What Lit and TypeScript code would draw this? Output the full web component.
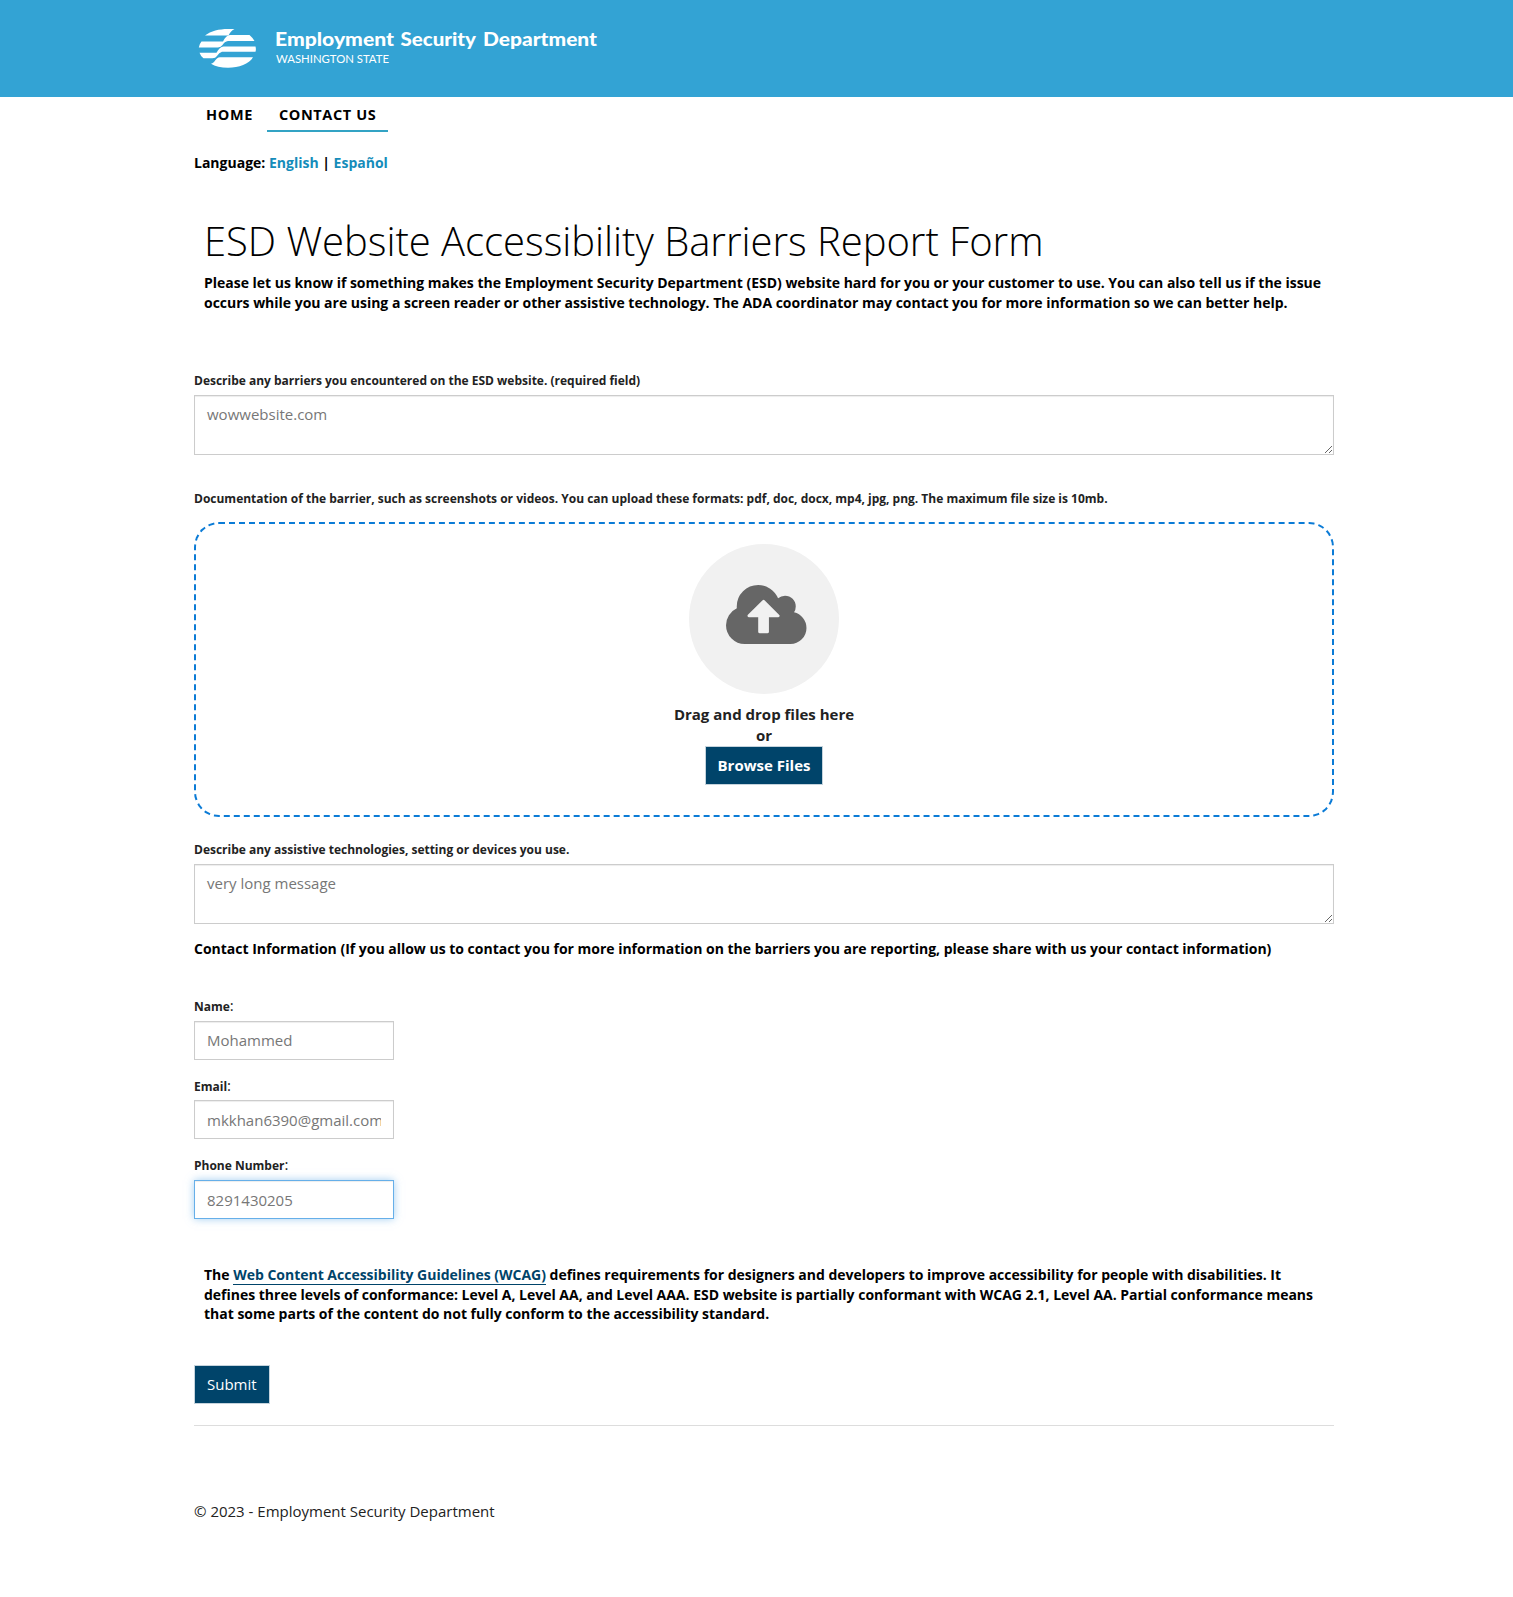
import { LitElement, html, css } from "lit";
import { customElement } from "lit/decorators.js";

@customElement("app-root")
export class AppRoot extends LitElement {
  static styles = css`
    :host { display: block; height: 1597px; overflow: hidden; background: #fff; color: #222; font: 15px/21.43px "Open Sans", sans-serif; }
    * { box-sizing: border-box; }
    .container { width: 1140px; margin-left: 194px; }
    .top { background: #33a3d4; height: 97px; }
    .logo { display: block; width: 420px; height: 97px; }
    .brand { font: 900 19px Lato, sans-serif; fill: #fff; }
    .state { font: 400 12px Lato, sans-serif; fill: #fff; }
    .nav { display: flex; height: 35px; }
    .nav a { padding: 7px 12px 0; height: 35px; font-size: 14.5px; font-weight: 700; letter-spacing: 0.62px; color: #000; border-bottom: 2px solid transparent; }
    .nav a.active { border-color: #33a3c4; margin-left: 2px; }
    .lang { margin-top: 21px; height: 20px; font-size: 14px; line-height: 20px; font-weight: 700; color: #000; }
    .lang a { color: #158cba; }
    h1 { margin: 44px 0 0 10px; font-size: 40px; line-height: 47px; height: 56px; font-weight: 300; letter-spacing: -0.025px; color: #000; white-space: nowrap; }
    .para { margin: 0 10px; font-size: 14px; line-height: 19.8px; font-weight: 700; letter-spacing: -0.013px; color: #000; white-space: nowrap; }
    .label { display: block; font-size: 12px; line-height: 17px; height: 17px; font-weight: 700; letter-spacing: -0.005px; white-space: nowrap; }
    .thin { font-weight: 400; font-size: 15px; }
    textarea, input { display: block; margin: 0; border: 1px solid #ccc; border-radius: 0; outline: none; padding: 8px 12px; font: inherit; color: #777; background: #fff; box-shadow: inset 0 1px 1px rgba(0, 0, 0, 0.075); }
    textarea { width: 1140px; height: 60px; resize: vertical; overflow: hidden; }
    input { width: 200px; height: 39px; }
    input::placeholder, textarea::placeholder { color: #777; opacity: 1; }
    .focus { padding: 9px 12px 7px; border-color: #66afe9; box-shadow: inset 0 1px 1px rgba(0, 0, 0, 0.075), 0 0 8px rgba(102, 175, 233, 0.6); }
    .l1 { margin-top: 59.4px; }
    .area { margin-top: 6px; }
    .l2 { margin-top: 35px; }
    .drop { margin-top: 15px; height: 295px; border: 2px dashed #0b7bd6; border-radius: 25px; padding-top: 20px; display: flex; flex-direction: column; align-items: center; font-weight: 700; }
    .circle { width: 150px; height: 150px; border-radius: 50%; background: #f1f1f1; display: flex; justify-content: center; padding-top: 41px; margin-bottom: 10px; }
    .cloud { width: 80.5px; height: 59px; fill: #666; margin-left: 5px; }
    .prompt { height: 21px; }
    .btn { display: block; font: inherit; color: #fff; background: #00446a; border: 1px solid #c5d3dc; border-radius: 0; height: 39px; padding: 0 12px; margin: 0; white-space: nowrap; }
    .l3 { margin-top: 24px; }
    .info { margin-top: 14.6px; font-size: 14px; line-height: 20px; font-weight: 700; letter-spacing: -0.009px; color: #000; white-space: nowrap; }
    .l4 { margin-top: 38.9px; }
    .field { margin-top: 6.4px; }
    .next { margin-top: 17px; }
    .wcag { margin-top: 46.6px; line-height: 19.6px; }
    .wcag a { color: #00446a; border-bottom: 1px solid #00446a; }
    .submit { margin-top: 40.8px; }
    .rule { margin-top: 21px; height: 1px; background: #ddd; }
    .foot { margin-top: 75px; }
  `;

  render() {
    return html`
      <header class="top"><div class="container">
        <svg class="logo" viewBox="194 0 420 97">
          <g fill="#fff">
            <path d="M205 35.5C211 31 219 29 228 29H234.500C231.500 30.500 230 32.500 228.500 35.500Z" />
            <path d="M201.500 41.500H223Q226 35.300 230 35H249.500Q252.500 37.500 254.500 41H228Q224.500 41.500 222.500 45Q221 47.400 218 47.400H198.800Q199.500 43.800 201.500 41.500Z" />
            <path d="M199.500 52.800H216.500Q219.500 46.600 223.500 46.400H255.500Q256.300 49.500 255.500 51.800H222Q219 52.500 217 56Q215.500 58.300 212.500 58.300H203.500Q200.500 56 199.500 52.800Z" />
            <path d="M211 63.800C215 63 215.500 57.500 220 57.200H253C249 64 239 67.700 228 67.700C221 67.700 215 66.300 211 63.800Z" />
          </g>
          <g class="brand">
            <text x="275" y="45.500" textLength="119" lengthAdjust="spacingAndGlyphs">Employment</text>
            <text x="400.500" y="45.500" textLength="75.500" lengthAdjust="spacingAndGlyphs">Security</text>
            <text x="483" y="45.500" textLength="114" lengthAdjust="spacingAndGlyphs">Department</text>
          </g>
          <text class="state" x="276" y="63" textLength="113" lengthAdjust="spacingAndGlyphs">WASHINGTON STATE</text>
        </svg>
      </div></header>
      <main class="container">
        <nav class="nav"><a>HOME</a><a class="active">CONTACT US</a></nav>
        <div class="lang">Language: <a>English</a> | <a>Español</a></div>
        <h1>ESD Website Accessibility Barriers Report Form</h1>
        <div class="para">Please let us know if something makes the Employment Security Department (ESD) website hard for you or your customer to use. You can also tell us if the issue<br />occurs while you are using a screen reader or other assistive technology. The ADA coordinator may contact you for more information so we can better help.</div>
        <label class="label l1">Describe any barriers you encountered on the ESD website. (required field)</label>
        <textarea class="area" placeholder="wowwebsite.com"></textarea>
        <label class="label l2">Documentation of the barrier, such as screenshots or videos. You can upload these formats: pdf, doc, docx, mp4, jpg, png. The maximum file size is 10mb.</label>
        <section class="drop">
          <div class="circle"><svg class="cloud" viewBox="0 0 1920 1408"><path d="M1280 736q0-14-9-23l-352-352q-9-9-23-9t-23 9l-351 351q-10 12-10 24 0 14 9 23t23 9h224v352q0 13 9.500 22.500t22.500 9.500h192q13 0 22.500-9.500t9.500-22.500v-352h224q13 0 22.500-9.500t9.500-22.500zm640 288q0 159-112.500 271.500t-271.500 112.500h-1088q-185 0-316.500-131.500t-131.500-316.500q0-130 70-240t188-165q-2-30-2-43 0-212 150-362t362-150q156 0 285.500 87t188.500 231q71-62 166-62 106 0 181 75t75 181q0 76-41 138 130 31 213.500 135.500t83.500 238.500z" /></svg></div>
          <div class="prompt">Drag and drop files here</div>
          <div class="prompt">or</div>
          <button class="btn">Browse Files</button>
        </section>
        <label class="label l3">Describe any assistive technologies, setting or devices you use.</label>
        <textarea class="area" placeholder="very long message"></textarea>
        <div class="info">Contact Information (If you allow us to contact you for more information on the barriers you are reporting, please share with us your contact information)</div>
        <label class="label l4">Name<span class="thin">:</span></label>
        <input class="field" placeholder="Mohammed" />
        <label class="label next">Email<span class="thin">:</span></label>
        <input class="field" placeholder="mkkhan6390@gmail.com" />
        <label class="label next">Phone Number<span class="thin">:</span></label>
        <input class="field focus" placeholder="8291430205" />
        <div class="para wcag">The <a>Web Content Accessibility Guidelines (WCAG)</a> defines requirements for designers and developers to improve accessibility for people with disabilities. It<br />defines three levels of conformance: Level A, Level AA, and Level AAA. ESD website is partially conformant with WCAG 2.1, Level AA. Partial conformance means<br />that some parts of the content do not fully conform to the accessibility standard.</div>
        <button class="btn submit">Submit</button>
        <div class="rule"></div>
        <footer class="foot">© 2023 - Employment Security Department</footer>
      </main>
    `;
  }
}
